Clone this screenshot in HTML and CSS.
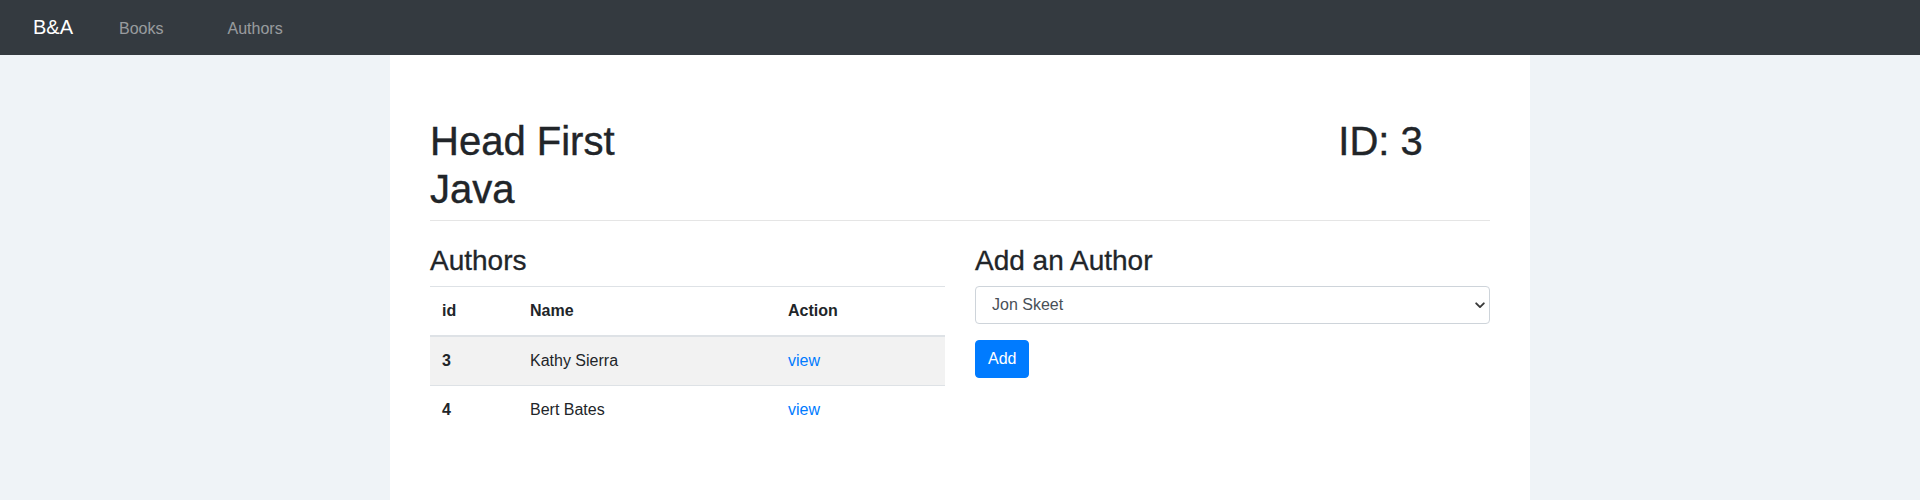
FILE: index.html
```html
<!DOCTYPE html>
<html lang="en">
<head>
<meta charset="utf-8">
<title>B&amp;A - Head First Java</title>
<link rel="stylesheet" href="styles.css">
</head>
<body>
<nav class="navbar">
  <a class="brand" href="#">B&amp;A</a>
  <a class="nav-link nav-books" href="#">Books</a>
  <a class="nav-link nav-authors" href="#">Authors</a>
</nav>
<main class="container">
  <div class="title-row">
    <h1 class="title">Head First Java</h1>
    <h1 class="book-id">ID: 3</h1>
  </div>
  <hr class="divider">
  <div class="columns">
    <section class="col">
      <h3 class="section-title">Authors</h3>
      <table class="table">
        <thead>
          <tr><th class="c-id">id</th><th class="c-name">Name</th><th class="c-action">Action</th></tr>
        </thead>
        <tbody>
          <tr class="striped"><th>3</th><td>Kathy Sierra</td><td><a href="#" class="link">view</a></td></tr>
          <tr><th>4</th><td>Bert Bates</td><td><a href="#" class="link">view</a></td></tr>
        </tbody>
      </table>
    </section>
    <section class="col">
      <h3 class="section-title">Add an Author</h3>
      <form class="add-form">
        <div class="select-wrap">
          <select class="form-select">
            <option>Jon Skeet</option>
            <option>Kathy Sierra</option>
            <option>Bert Bates</option>
          </select>
          <svg class="chevron" width="10" height="7" viewBox="0 0 10 7"><path d="M1.2 1.3 L5 5.1 L8.8 1.3" fill="none" stroke="#3a3a3a" stroke-width="1.9" stroke-linecap="round" stroke-linejoin="round"/></svg>
        </div>
        <button type="button" class="btn">Add</button>
      </form>
    </section>
  </div>
</main>
</body>
</html>
```
FILE: styles.css
```css
* { box-sizing: border-box; }
html, body { margin: 0; padding: 0; }
body {
  background: #eff3f7;
  font-family: "Liberation Sans", Arial, sans-serif;
  font-size: 16px;
  line-height: 1.5;
  color: #212529;
}
a { text-decoration: none; }

.navbar {
  height: 55px;
  background: #343a40;
  display: flex;
  align-items: baseline;
  padding-left: 33px;
  padding-top: 12px;
}
.brand {
  color: #fff;
  font-size: 20px;
  line-height: 30px;
}
.nav-link {
  color: rgba(255, 255, 255, 0.5);
  font-size: 16px;
  line-height: 24px;
}
.nav-books { margin-left: 46px; }
.nav-authors { margin-left: 64px; }

.container {
  width: 1140px;
  margin: 0 auto;
  background: #fff;
  min-height: calc(100vh - 55px);
  padding: 62px 40px 40px;
}

.title-row {
  display: grid;
  grid-template-columns: repeat(12, 1fr);
  column-gap: 30px;
}
.title, .book-id {
  margin: 0;
  font-size: 40px;
  font-weight: 500;
  line-height: 1.2;
  -webkit-text-stroke: 0.4px currentColor;
}
.title { grid-column: 1 / span 3; }
.book-id { grid-column: 11 / span 2; }

.divider {
  border: 0;
  border-top: 1px solid rgba(0, 0, 0, 0.1);
  margin: 7px 0 23px;
}

.columns {
  display: grid;
  grid-template-columns: 1fr 1fr;
  column-gap: 30px;
}
.section-title {
  margin: 0 0 8px;
  font-size: 28px;
  font-weight: 500;
  line-height: 1.2;
  -webkit-text-stroke: 0.3px currentColor;
}

.table {
  width: 100%;
  border-collapse: collapse;
  color: #212529;
}
.table th, .table td {
  padding: 12px;
  text-align: left;
  vertical-align: top;
  border-top: 1px solid #dee2e6;
  line-height: 24px;
}
.table th { font-weight: 700; }
.table thead th {
  border-bottom: 2px solid #dee2e6;
}
.c-id { width: 88px; }
.c-name { width: 258px; }
.striped { background: #f2f2f2; }
.link { color: #007bff; }

.select-wrap {
  position: relative;
  margin-bottom: 16px;
}
.form-select {
  display: block;
  width: 100%;
  height: 38px;
  appearance: none;
  -webkit-appearance: none;
  background: #fff;
  border: 1px solid #ced4da;
  border-radius: 4px;
  padding: 0 30px 0 16px;
  font-family: "Liberation Sans", Arial, sans-serif;
  font-size: 16px;
  color: #495057;
}
.chevron {
  position: absolute;
  right: 5px;
  top: 16px;
  pointer-events: none;
}
.btn {
  display: inline-block;
  height: 38px;
  padding: 0 12px;
  border: 1px solid #007bff;
  background: #007bff;
  color: #fff;
  border-radius: 4px;
  font-family: "Liberation Sans", Arial, sans-serif;
  font-size: 16px;
  line-height: 24px;
}
```
